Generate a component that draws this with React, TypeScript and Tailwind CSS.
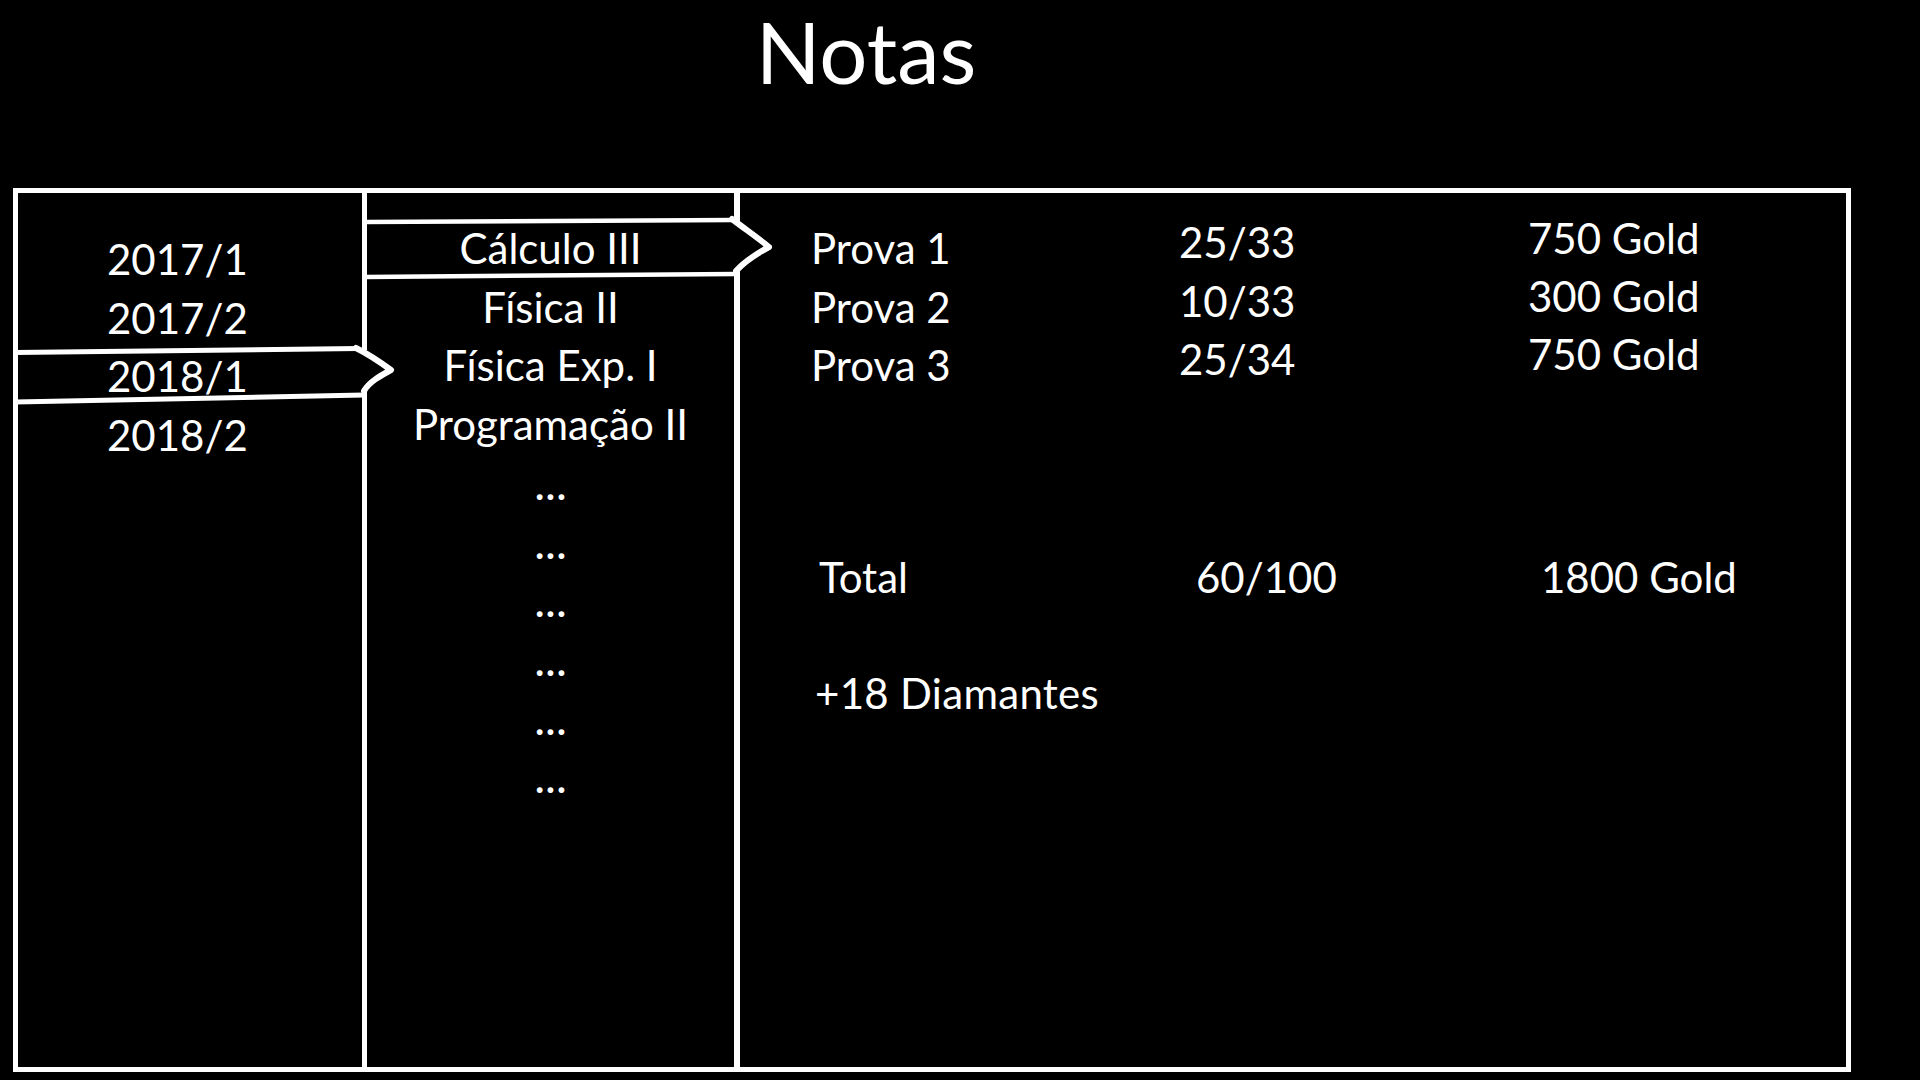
export default function App() {
  const years = ["2017/1", "2017/2", "2018/1", "2018/2"];
  const subjects = [
    "Cálculo III",
    "Física II",
    "Física Exp. I",
    "Programação II",
    "...",
    "...",
    "...",
    "...",
    "...",
    "...",
  ];
  const provas = ["Prova 1", "Prova 2", "Prova 3"];
  const scores = ["25/33", "10/33", "25/34"];
  const golds = ["750 Gold", "300 Gold", "750 Gold"];

  return (
    <div className="relative w-[1920px] h-[1080px] overflow-hidden bg-black text-white font-[Lato,sans-serif]">
      <div className="h-[188px] w-[1732px] text-center text-[85px] leading-[102px]">
        Notas
      </div>

      <div className="flex h-[884px] ml-[13px]">
        <div className="w-[354px] border-[5px] border-white pt-[37px] pl-[89px] text-[42px] leading-[58.5px]">
          {years.map((y) => (
            <div key={y}>{y}</div>
          ))}
        </div>

        <div className="w-[373px] border-y-[5px] border-r-[6px] border-white pt-[26px] text-center text-[42px] leading-[58.7px]">
          {subjects.map((s, i) => (
            <div key={i} className={s === "..." ? "text-[46px]" : ""}>
              {s}
            </div>
          ))}
        </div>

        <div className="w-[1111px] border-y-[5px] border-r-[5px] border-white text-[42px] leading-[58.7px]">
          <div className="flex items-start">
            <div className="ml-[71px] w-[368px] pt-[26px]">
              {provas.map((p) => (
                <div key={p}>{p}</div>
              ))}
            </div>
            <div className="w-[349px] pt-[20px] leading-[58.5px]">
              {scores.map((s, i) => (
                <div key={i}>{s}</div>
              ))}
            </div>
            <div className="pt-[16px] leading-[58px]">
              {golds.map((g, i) => (
                <div key={i}>{g}</div>
              ))}
            </div>
          </div>

          <div className="mt-[153px] flex">
            <div className="ml-[79px] w-[377px]">Total</div>
            <div className="w-[345px]">60/100</div>
            <div>1800 Gold</div>
          </div>

          <div className="mt-[57px] ml-[75px] tracking-[0.3px]">+18 Diamantes</div>
        </div>
      </div>

      <svg
        className="pointer-events-none absolute left-0 top-0"
        width="1920"
        height="1080"
        viewBox="0 0 1920 1080"
        fill="none"
      >
        {/* left column selection band */}
        <rect x="361" y="350" width="8" height="38" fill="#000" />
        <line x1="15" y1="352.5" x2="359" y2="348.5" stroke="#fff" strokeWidth="5" />
        <line x1="15" y1="402" x2="364" y2="395" stroke="#fff" strokeWidth="5" />
        <path
          d="M356 348 C 366 353, 380 362, 391 370 C 380 376, 369 382, 364 391"
          stroke="#fff"
          strokeWidth="6"
          strokeLinecap="round"
          strokeLinejoin="round"
        />

        {/* middle column selection band */}
        <rect x="732" y="222" width="9" height="47" fill="#000" />
        <line x1="365" y1="222" x2="734" y2="220" stroke="#fff" strokeWidth="4.5" />
        <line x1="365" y1="277" x2="736" y2="274" stroke="#fff" strokeWidth="4.5" />
        <path
          d="M732 219 C 745 229, 758 238, 769 247 C 758 253, 745 261, 736 271"
          stroke="#fff"
          strokeWidth="6"
          strokeLinecap="round"
          strokeLinejoin="round"
        />
      </svg>
    </div>
  );
}
